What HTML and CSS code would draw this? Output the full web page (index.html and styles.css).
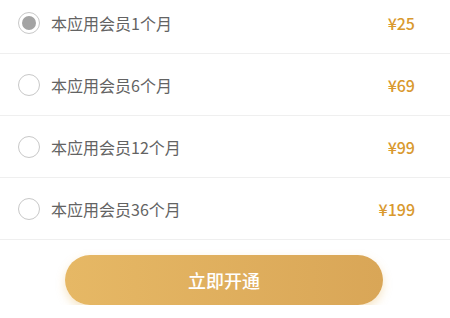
FILE: index.html
```html
<!DOCTYPE html>
<html>
  <head>
    <title>会员开通</title>
    <link rel="stylesheet" href="styles.css">
  </head>
  <body>
    <div class="plan-list">
      <div class="plan-row">
        <span class="radio radio-checked"></span>
        <span class="plan-name">本应用会员1个月</span>
        <span class="plan-price">¥25</span>
      </div>
      <div class="plan-row">
        <span class="radio"></span>
        <span class="plan-name">本应用会员6个月</span>
        <span class="plan-price">¥69</span>
      </div>
      <div class="plan-row">
        <span class="radio"></span>
        <span class="plan-name">本应用会员12个月</span>
        <span class="plan-price">¥99</span>
      </div>
      <div class="plan-row">
        <span class="radio"></span>
        <span class="plan-name">本应用会员36个月</span>
        <span class="plan-price">¥199</span>
      </div>
    </div>

    <div class="button-container">
      <button class="open-button">立即开通</button>
    </div>
  </body>
</html>
```

FILE: styles.css
```css
body {
  margin: 0;
  background-color: white;
  font-family: "Noto Sans CJK SC", "Noto Sans", sans-serif;
  overflow: hidden;
}
.plan-list {
  margin-top: -8px;
}
.plan-row {
  display: flex;
  align-items: center;
  height: 61px;
  padding: 0 35px 0 18px;
  border-bottom: 1px solid #efefef;
}
.radio {
  width: 20px;
  height: 20px;
  border: 1.5px solid #c8c8c8;
  border-radius: 50%;
  display: flex;
  justify-content: center;
  align-items: center;
  flex-shrink: 0;
}
.radio-checked::after {
  content: "";
  width: 14px;
  height: 14px;
  border-radius: 50%;
  background-color: #a3a3a3;
}
.plan-name {
  margin-left: 11px;
  font-size: 16px;
  color: #636363;
  flex: 1;
}
.plan-price {
  font-size: 16px;
  font-weight: 500;
  color: #d9992e;
}
.button-container {
  display: flex;
  justify-content: center;
  padding-top: 15px;
}
.open-button {
  width: 318px;
  height: 50px;
  border: none;
  border-radius: 25px;
  background: linear-gradient(to right, #e6b865, #d9a657);
  box-shadow: 0 4px 10px rgba(230, 180, 90, 0.35);
  color: white;
  font-family: "Noto Sans CJK SC", "Noto Sans", sans-serif;
  font-size: 18px;
  font-weight: 500;
  margin-right: 2px;
}
```
